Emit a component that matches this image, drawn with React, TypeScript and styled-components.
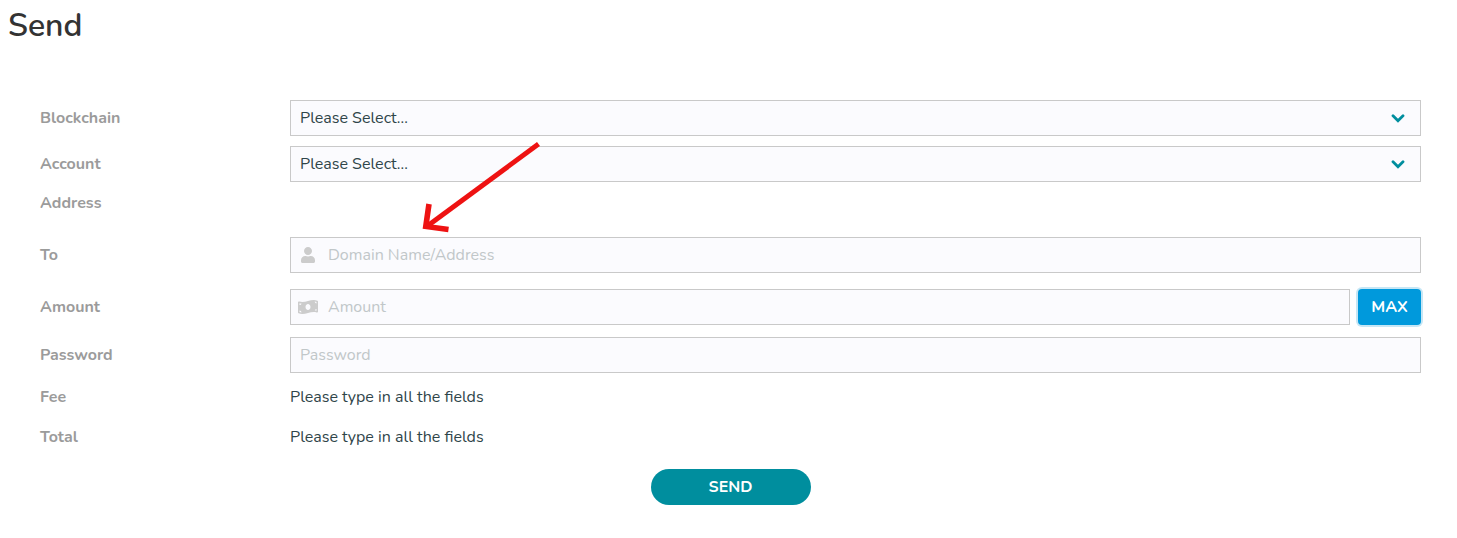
import React from "react";
import styled, { createGlobalStyle } from "styled-components";
import { FaMoneyBillWave, FaUser } from "react-icons/fa";

const GlobalStyle = createGlobalStyle`
  * { box-sizing: border-box; }
  body {
    margin: 0;
    background: #fff;
    color: #2f4549;
    font: 400 16px/24px Nunito, Lato, "Open Sans", sans-serif;
  }
`;

const Page = styled.main`
  position: relative;
  padding: 0 36px 32px 40px;
`;

const Title = styled.h1`
  margin: 0 0 48px -32px;
  color: #333;
  font-size: 32px;
  font-weight: 600;
  line-height: 52px;
`;

const Row = styled.div<{ $space?: number }>`
  display: grid;
  grid-template-columns: 250px minmax(0, 1fr);
  align-items: center;
  margin-top: ${(p) => p.$space ?? 0}px;
`;

const Label = styled.label`
  color: #9b9b9b;
  font-weight: 700;
`;

const Caption = styled(Label).attrs({ as: "span" })``;

const Control = styled.div`
  position: relative;
  flex: 1;
  height: 36px;
`;

const Select = styled.select`
  display: block;
  width: 100%;
  height: 36px;
  padding: 0 36px 0 9px;
  border: 1px solid #c9c9c9;
  border-radius: 0;
  appearance: none;
  background: #fbfbfe;
  color: inherit;
  font: inherit;
`;

const Input = styled.input<{ $icon?: boolean }>`
  display: block;
  width: 100%;
  height: 36px;
  padding: 0 9px 0 ${(p) => (p.$icon ? 37 : 9)}px;
  border: 1px solid #c9c9c9;
  border-radius: 0;
  background: #fbfbfe;
  color: inherit;
  font: inherit;

  &::placeholder {
    color: #c1c7c9;
    opacity: 1;
  }
`;

const FieldIcon = styled.span`
  position: absolute;
  top: 0;
  left: 0;
  display: flex;
  align-items: center;
  justify-content: center;
  width: 36px;
  height: 36px;
  color: #ccc;
  font-size: 16px;
  pointer-events: none;
`;

const Chevron = styled.svg`
  position: absolute;
  top: 14px;
  right: 16px;
  width: 14px;
  height: 9px;
  pointer-events: none;
`;

const AmountGroup = styled.div`
  display: flex;
  gap: 8px;
`;

const MaxButton = styled.button`
  width: 63px;
  height: 36px;
  padding: 0;
  border: 0;
  border-radius: 4px;
  background: #0099dc;
  box-shadow: 0 0 0 2px #c5e6f5;
  color: #fff;
  font: inherit;
  font-weight: 700;
`;

const Actions = styled.div`
  display: flex;
  justify-content: center;
  margin-top: 20px;
`;

const SendButton = styled.button`
  width: 160px;
  height: 36px;
  border: 0;
  border-radius: 18px;
  background: #008e9e;
  color: #fff;
  font: inherit;
  font-weight: 700;
`;

const Arrow = styled.svg`
  position: absolute;
  top: 140px;
  left: 420px;
  width: 124px;
  height: 96px;
  pointer-events: none;
`;

function SelectField({ id }: { id: string }) {
  return (
    <Control>
      <Select id={id} defaultValue="">
        <option value="">Please Select...</option>
      </Select>
      <Chevron viewBox="0 0 14 9" aria-hidden="true">
        <path
          d="M2 1.8L7 6.8L12 1.8"
          fill="none"
          stroke="#008e9e"
          strokeWidth="2.8"
          strokeLinecap="round"
        />
      </Chevron>
    </Control>
  );
}

export default function App() {
  return (
    <>
      <GlobalStyle />
      <Page>
        <Title>Send</Title>
        <form onSubmit={(e) => e.preventDefault()}>
          <Row>
            <Label htmlFor="blockchain">Blockchain</Label>
            <SelectField id="blockchain" />
          </Row>
          <Row $space={10}>
            <Label htmlFor="account">Account</Label>
            <SelectField id="account" />
          </Row>
          <Row $space={9}>
            <Caption>Address</Caption>
          </Row>
          <Row $space={22}>
            <Label htmlFor="to">To</Label>
            <Control>
              <Input $icon id="to" type="text" placeholder="Domain Name/Address" />
              <FieldIcon>
                <FaUser />
              </FieldIcon>
            </Control>
          </Row>
          <Row $space={16}>
            <Label htmlFor="amount">Amount</Label>
            <AmountGroup>
              <Control>
                <Input $icon id="amount" type="text" placeholder="Amount" />
                <FieldIcon>
                  <FaMoneyBillWave size={20} />
                </FieldIcon>
              </Control>
              <MaxButton type="button">MAX</MaxButton>
            </AmountGroup>
          </Row>
          <Row $space={12}>
            <Label htmlFor="password">Password</Label>
            <Input id="password" type="password" placeholder="Password" />
          </Row>
          <Row $space={12}>
            <Caption>Fee</Caption>
            <span>Please type in all the fields</span>
          </Row>
          <Row $space={16}>
            <Caption>Total</Caption>
            <span>Please type in all the fields</span>
          </Row>
          <Actions>
            <SendButton type="submit">SEND</SendButton>
          </Actions>
        </form>
        <Arrow viewBox="0 0 124 96" fill="none" stroke="#ee1212" aria-hidden="true">
          <path d="M118.500 4L6 87" strokeWidth="5" />
          <path d="M9 64L5.800 86.400L28.500 89.500" strokeWidth="5.6" />
        </Arrow>
      </Page>
    </>
  );
}
